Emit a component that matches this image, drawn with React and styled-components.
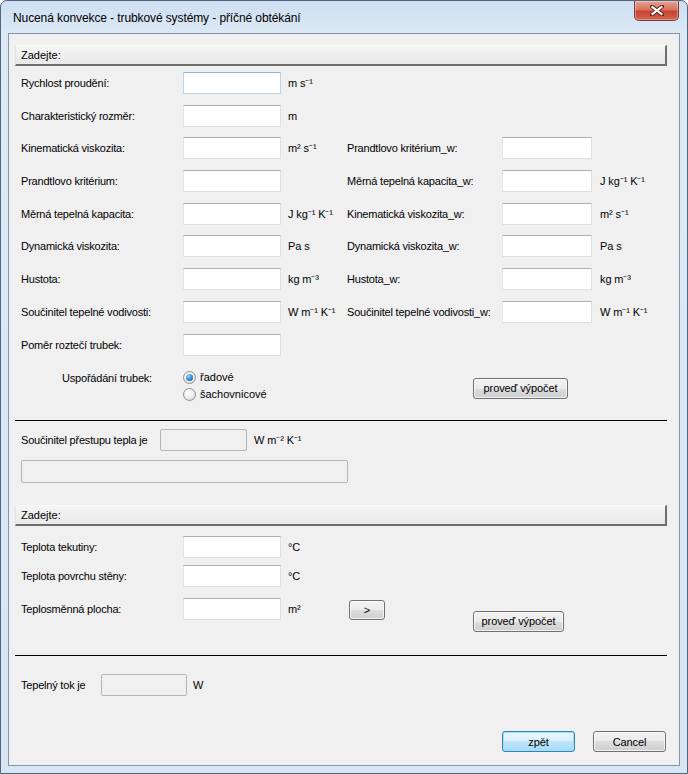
import React from 'react'
import styled, { createGlobalStyle, css } from 'styled-components'

const GlobalStyle = createGlobalStyle`
  html, body {
    margin: 0;
    padding: 0;
    background: #ffffff;
  }
  body {
    font-family: "Liberation Sans", Arial, sans-serif;
    font-size: 11px;
    color: #000;
  }
`

// okno ve stylu Windows 7
const Window = styled.div`
  width: 688px;
  height: 774px;
  box-sizing: border-box;
  border: 1px solid #52667f;
  border-radius: 7px 7px 0 0;
  background: linear-gradient(to bottom, #cddff1 0px, #dde9f5 32px, #d8e5f3 100%);
  display: flex;
  flex-direction: column;
  overflow: hidden;
`

const TitleBar = styled.div`
  height: 32px;
  flex: none;
  display: flex;
  align-items: flex-start;
  justify-content: space-between;
  padding-left: 12px;
  box-sizing: border-box;
`

const Title = styled.div`
  margin-top: 10px;
  font-size: 12px;
  letter-spacing: -0.1px;
  color: #000;
`

const CloseButton = styled.div`
  width: 45px;
  height: 20px;
  margin-right: 8px;
  box-sizing: border-box;
  border: 1px solid #7c3a33;
  border-top: none;
  border-radius: 0 0 5px 5px;
  background: linear-gradient(to bottom, #e8a493 0%, #d7735f 45%, #c44430 55%, #d2654f 100%);
  box-shadow: inset 0 0 0 1px rgba(255, 255, 255, 0.35);
  display: flex;
  align-items: center;
  justify-content: center;
`

const Client = styled.div`
  flex: 1;
  margin: 0 7px 7px;
  border: 1px solid #8596ac;
  background: #f0f0f0;
  padding: 11px 12px 0 6px;
  display: flex;
  flex-direction: column;
`

const SectionBar = styled.div`
  height: 21px;
  box-sizing: border-box;
  border-top: 1px solid #fafafa;
  border-left: 1px solid #e2e2e2;
  border-right: 2px solid #6f6f6f;
  border-bottom: 2px solid #6f6f6f;
  background: linear-gradient(to bottom, #f5f5f5, #e9e9e9);
  padding-left: 5px;
  display: flex;
  align-items: center;
  margin-top: ${p => p.$mt || 0}px;
`

const Rows = styled.div`
  display: flex;
  flex-direction: column;
  gap: 10.7px;
  margin-top: 6px;
`

const Row = styled.div`
  display: grid;
  grid-template-columns: ${p => p.$cols || '168px 98px 66px 155px 90px auto'};
  align-items: start;
  margin-top: ${p => p.$mt || 0}px;
`

const Label = styled.span`
  padding-left: ${p => p.$pl ?? 6}px;
  line-height: 22px;
  letter-spacing: -0.2px;
  white-space: nowrap;
`

const Unit = styled.span`
  padding-left: ${p => p.$pl ?? 7}px;
  line-height: 22px;
  white-space: nowrap;
  letter-spacing: -0.1px;
`

const Field = styled.div`
  width: ${p => p.$w || 98}px;
  height: ${p => p.$h || 22}px;
  box-sizing: border-box;
  background: #fff;
  border: 1px solid #dbdfe6;
  border-top-color: #abadb3;
  border-left-color: #e2e3ea;
  ${p => p.$focus && css`
    border-color: #b9d3ec;
    border-top-color: #8fb4d9;
  `}
  ${p => p.$disabled && css`
    background: #f0f0f0;
    border-color: #b4b4b4;
    border-radius: 2px;
  `}
`

const PushButton = styled.div`
  width: ${p => p.$w || 73}px;
  height: ${p => p.$h || 21}px;
  box-sizing: border-box;
  border: 1px solid #707070;
  border-radius: 3px;
  background: linear-gradient(to bottom, #f2f2f2 0%, #ebebeb 50%, #dddddd 50%, #cfcfcf 100%);
  box-shadow: inset 0 0 0 1px rgba(255, 255, 255, 0.7);
  display: flex;
  align-items: center;
  justify-content: center;
  letter-spacing: -0.1px;
  margin-top: ${p => p.$top || 0}px;
  ${p => p.$default && css`
    border-color: #3c7fb1;
    background: linear-gradient(to bottom, #eaf6fd 0%, #d9f0fc 50%, #bee6fd 50%, #a7d9f5 100%);
    box-shadow: inset 0 0 0 1px #97e4fa;
  `}
`

const RadioRow = styled.div`
  display: grid;
  grid-template-columns: 168px 290px auto;
  align-items: start;
  margin-top: 13px;
`

const RadioLabel = styled.span`
  padding-left: 47px;
  padding-top: 3px;
  letter-spacing: -0.2px;
`

const RadioGroup = styled.div`
  display: flex;
  flex-direction: column;
`

const RadioItem = styled.div`
  height: 17px;
  display: flex;
  align-items: center;
  gap: 4px;
`

const RadioCircle = styled.span`
  width: 13px;
  height: 13px;
  box-sizing: border-box;
  border-radius: 50%;
  border: 1px solid #8e8f8f;
  background: radial-gradient(circle at 40% 35%, #ffffff 0%, #eeeeee 50%, #d2d2d2 100%);
  display: flex;
  align-items: center;
  justify-content: center;
  &::after {
    content: "";
    display: ${p => p.$checked ? 'block' : 'none'};
    width: 7px;
    height: 7px;
    border-radius: 50%;
    background: radial-gradient(circle at 35% 30%, #9ce0fb 0%, #3d97d6 45%, #16528a 100%);
  }
`

const Divider = styled.div`
  height: 1px;
  background: #000;
  margin-top: ${p => p.$mt || 0}px;
`

const ResultRow = styled.div`
  display: grid;
  grid-template-columns: ${p => p.$label}px auto auto;
  align-items: center;
  margin-top: ${p => p.$mt || 0}px;
  justify-content: start;
`

const WideField = styled(Field)`
  margin-left: 6px;
  margin-top: 9px;
`

const Footer = styled.div`
  margin-top: auto;
  padding-bottom: 13px;
  padding-right: 1px;
  display: flex;
  justify-content: flex-end;
  gap: 18px;
`

const mainRows = [
  { label: 'Rychlost proudění:', unit: 'm s⁻¹', focus: true },
  { label: 'Charakteristický rozměr:', unit: 'm' },
  { label: 'Kinematická viskozita:', unit: 'm² s⁻¹', right: 'Prandtlovo kritérium_w:', rightUnit: '' },
  { label: 'Prandtlovo kritérium:', unit: '', right: 'Měrná tepelná kapacita_w:', rightUnit: 'J kg⁻¹ K⁻¹' },
  { label: 'Měrná tepelná kapacita:', unit: 'J kg⁻¹ K⁻¹', right: 'Kinematická viskozita_w:', rightUnit: 'm² s⁻¹' },
  { label: 'Dynamická viskozita:', unit: 'Pa s', right: 'Dynamická viskozita_w:', rightUnit: 'Pa s' },
  { label: 'Hustota:', unit: 'kg m⁻³', right: 'Hustota_w:', rightUnit: 'kg m⁻³' },
  { label: 'Součinitel tepelné vodivosti:', unit: 'W m⁻¹ K⁻¹', right: 'Součinitel tepelné vodivosti_w:', rightUnit: 'W m⁻¹ K⁻¹' },
  { label: 'Poměr roztečí trubek:', unit: '' },
]

function CloseIcon() {
  return (
    <svg width="14" height="11" viewBox="0 0 14 11">
      <path d="M2 1.5 L12 9.5 M12 1.5 L2 9.5" stroke="#6b2219" strokeWidth="4" strokeLinecap="round" />
      <path d="M2.5 2 L11.5 9 M11.5 2 L2.5 9" stroke="#ffffff" strokeWidth="2.2" strokeLinecap="square" />
    </svg>
  )
}

function App() {
  return (
    <>
      <GlobalStyle />
      <Window>
        <TitleBar>
          <Title>Nucená konvekce - trubkové systémy - příčné obtékání</Title>
          <CloseButton><CloseIcon /></CloseButton>
        </TitleBar>

        <Client>
          <SectionBar>Zadejte:</SectionBar>

          <Rows>
            {mainRows.map(r => (
              <Row key={r.label}>
                <Label>{r.label}</Label>
                <Field $focus={r.focus} />
                <Unit>{r.unit}</Unit>
                {r.right && <Label $pl={0}>{r.right}</Label>}
                {r.right && <Field $w={90} />}
                {r.right && <Unit $pl={8}>{r.rightUnit}</Unit>}
              </Row>
            ))}
          </Rows>

          <RadioRow>
            <RadioLabel>Uspořádání trubek:</RadioLabel>
            <RadioGroup>
              <RadioItem><RadioCircle $checked />řadové</RadioItem>
              <RadioItem><RadioCircle />šachovnicové</RadioItem>
            </RadioGroup>
            <PushButton $w={95} $top={9}>proveď výpočet</PushButton>
          </RadioRow>

          <Divider $mt={17} />

          <ResultRow $label={145} $mt={8}>
            <Label>Součinitel přestupu tepla je</Label>
            <Field $w={87} $disabled />
            <Unit $pl={7}>W m⁻² K⁻¹</Unit>
          </ResultRow>
          <WideField $w={327} $h={23} $disabled />

          <SectionBar $mt={22}>Zadejte:</SectionBar>

          <Row $mt={10}>
            <Label>Teplota tekutiny:</Label>
            <Field />
            <Unit>°C</Unit>
          </Row>
          <Row $mt={7}>
            <Label>Teplota povrchu stěny:</Label>
            <Field />
            <Unit>°C</Unit>
          </Row>
          <Row $mt={11} $cols="168px 98px 68px 124px auto">
            <Label>Teplosměnná plocha:</Label>
            <Field />
            <Unit>m²</Unit>
            <PushButton $w={36} $h={20} $top={2}>&gt;</PushButton>
            <PushButton $w={91} $top={13}>proveď výpočet</PushButton>
          </Row>

          <Divider $mt={23} />

          <ResultRow $label={86} $mt={18}>
            <Label>Tepelný tok je</Label>
            <Field $w={86} $disabled />
            <Unit $pl={6}>W</Unit>
          </ResultRow>

          <Footer>
            <PushButton $default>zpět</PushButton>
            <PushButton>Cancel</PushButton>
          </Footer>
        </Client>
      </Window>
    </>
  )
}

export default App
